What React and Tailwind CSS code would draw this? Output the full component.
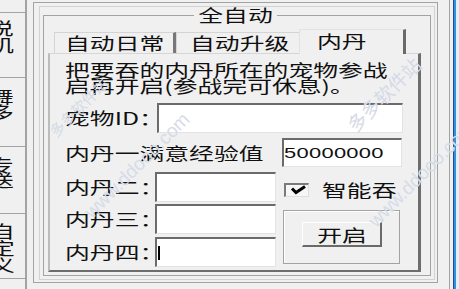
import React from "react";

const S = ({ children, className = "" }) => (
  <span className={"inline-block whitespace-nowrap origin-left [transform:scaleX(1.46)] " + className}>
    {children}
  </span>
);

const SC = ({ children, className = "" }) => (
  <span className={"inline-block whitespace-nowrap origin-center [transform:scaleX(1.46)] " + className}>
    {children}
  </span>
);

const Field = ({ className = "", children }) => (
  <div
    className={
      "bg-white border-t-2 border-l-2 border-t-[#6b6b6b] border-l-[#6b6b6b] border-r border-b border-r-[#e3e3e3] border-b-[#e3e3e3] flex items-center shrink-0 " +
      className
    }
  >
    {children}
  </div>
);

export default function App() {
  return (
    <div className="relative w-[459px] h-[289px] bg-[#f0f0f0] flex overflow-hidden font-['Noto_Sans_CJK_SC',sans-serif] text-[17px] leading-[16px] text-[#101010]">
      {/* left vertical tab strip */}
      <div className="w-[27px] h-full shrink-0 border-r-2 border-r-[#a3a3a3] flex flex-col overflow-hidden">
        <div className="h-[13px] shrink-0 border-b border-b-[#a3a3a3]" />
        <div className="h-[65px] shrink-0 border-b border-b-[#a3a3a3] pt-[7px] flex flex-col gap-[1px]">
          <S className="-ml-[11px]">说</S>
          <S className="-ml-[11px]">机</S>
        </div>
        <div className="h-[69px] shrink-0 border-b border-b-[#a3a3a3] pt-[10px] flex flex-col">
          <S className="-ml-[11px]">舞</S>
          <S className="-ml-[11px]">多</S>
        </div>
        <div className="h-[67px] shrink-0 border-b border-b-[#a3a3a3] pt-[10px] flex flex-col leading-[15px]">
          <S className="-ml-[11px]">专</S>
          <S className="-ml-[11px]">送</S>
        </div>
        <div className="h-[65px] shrink-0 border-b border-b-[#a3a3a3] pt-[9px] flex flex-col gap-[1px]">
          <S className="-ml-[10px]">自</S>
          <S className="-ml-[10px]">定</S>
          <S className="-ml-[10px]">义</S>
        </div>
      </div>

      {/* main frame */}
      <div className="ml-[6px] mt-[2px] w-[405px] h-[281px] shrink-0 border border-[#a3a3a3] pl-[5px] pt-[3px]">
        <div className="w-[396px] h-[274px] border border-[#d2d2d2] pl-[3px]">
          <fieldset className="w-[388px] h-[269px] m-0 min-w-0 border border-[#a3a3a3] pl-[4px] pr-[8px] pb-[2px]">
            <legend className="mx-auto px-[16px] bg-[#f0f0f0]">
              <SC>全自动</SC>
            </legend>

            {/* tabs */}
            <div className="mt-[6px] h-[24px] flex items-end">
              <div className="ml-[6px] w-[122px] h-[21px] border-t border-l border-[#d4d4d4] border-r-[3px] border-r-[#777777] pl-[10px] flex items-center">
                <S>自动日常</S>
              </div>
              <div className="w-[123px] h-[21px] border-t border-l border-[#d4d4d4] pl-[13px] flex items-center">
                <S>自动升级</S>
              </div>
              <div className="relative z-10 -mb-px w-[107px] h-[25px] bg-[#f0f0f0] border-t border-l border-[#e2e2e2] border-r-[3px] border-r-[#6a6a6a] pl-[17px] pt-[3px]">
                <S>内丹</S>
              </div>
            </div>

            {/* tab panel */}
            <div className="w-[373px] h-[219px] border-l-2 border-t border-r-[3px] border-b-2 border-l-[#bcbcbc] border-t-[#d6d6d6] border-r-[#6d6d6d] border-b-[#6d6d6d] pl-[15px] pt-[8px]">
              <div>
                <S>把要吞的内丹所在的宠物参战</S>
              </div>
              <div>
                <S>启再开启(参战完可休息)。</S>
              </div>

              <div className="mt-[9px] flex items-center">
                <div className="w-[92px] shrink-0">
                  <S>宠物ID：</S>
                </div>
                <Field className="w-[246px] h-[30px]" />
              </div>

              <div className="mt-[5px] flex items-center">
                <div className="w-[217px] shrink-0">
                  <S>内丹一满意经验值</S>
                </div>
                <Field className="w-[120px] h-[29px]">
                  <S className="font-['Liberation_Sans',sans-serif] text-[15px] tracking-[0.2px]">50000000</S>
                </Field>
              </div>

              <div className="mt-[5px] flex">
                <div className="flex flex-col">
                  <div className="flex items-center">
                    <div className="w-[90px] shrink-0">
                      <S>内丹二：</S>
                    </div>
                    <Field className="w-[121px] h-[30px]" />
                  </div>
                  <div className="mt-[2px] flex items-center">
                    <div className="w-[90px] shrink-0">
                      <S>内丹三：</S>
                    </div>
                    <Field className="w-[121px] h-[30px]" />
                  </div>
                  <div className="mt-[3px] flex items-center">
                    <div className="w-[90px] shrink-0">
                      <S>内丹四：</S>
                    </div>
                    <Field className="w-[121px] h-[30px]">
                      <div className="ml-[1px] w-[2px] h-[14px] bg-black" />
                    </Field>
                  </div>
                </div>

                <div className="ml-[7px] w-[117px] flex flex-col">
                  <div className="mt-[10px] h-[15px] flex items-center">
                    <div className="ml-[1px] w-[25px] h-[14px] shrink-0 bg-[#f6f6f6] border-t-2 border-l-2 border-t-[#7a7a7a] border-l-[#7a7a7a] border-r border-b border-r-[#dedede] border-b-[#dedede]">
                      <svg width="22" height="11" viewBox="0 0 22 11" className="block">
                        <path d="M6 3.5 L10 7.5 L19 1.5" fill="none" stroke="#000" strokeWidth="3" />
                      </svg>
                    </div>
                    <div className="ml-[13px]">
                      <S>智能吞</S>
                    </div>
                  </div>
                  <div className="mt-[13px] w-[117px] h-[54px] border border-[#a3a3a3] shadow-[inset_1px_1px_0_#ffffff] pl-[18px] pt-[11px]">
                    <div className="w-[80px] h-[25px] border-t border-l border-white border-r-2 border-b-2 border-r-[#6a6a6a] border-b-[#6a6a6a] pt-[2px] flex items-center justify-center">
                      <SC>开启</SC>
                    </div>
                  </div>
                </div>
              </div>
            </div>
          </fieldset>
        </div>
      </div>

      {/* right window edge */}
      <div className="ml-[11px] w-px h-full shrink-0 bg-[#a3a3a3]" />
      <div className="w-[3px] h-full shrink-0" />
      <div className="w-px h-full shrink-0 bg-[#1d4f86]" />
      <div className="w-[2px] h-full shrink-0 bg-[#2f93df]" />
      <div className="w-[3px] h-full shrink-0 bg-[#e4eef8]" />

      {/* watermarks */}
      <div className="pointer-events-none absolute left-[52px] top-[126px] origin-left -rotate-45 text-[15px] leading-[16px] text-[#d4dae6]">
        多多软件站
      </div>
      <div className="pointer-events-none absolute left-[88px] top-[205px] origin-left -rotate-45 font-['Liberation_Sans',sans-serif] text-[19px] leading-[20px] text-[#d6dce8]">
        www.ddooo.com
      </div>
      <div className="pointer-events-none absolute left-[350px] top-[118px] origin-left -rotate-45 text-[19px] leading-[20px] text-[#d4dae6]">
        多多软件站
      </div>
      <div className="pointer-events-none absolute left-[372px] top-[214px] origin-left -rotate-45 font-['Liberation_Sans',sans-serif] text-[19px] leading-[20px] text-[#d6dce8]">
        www.ddooo.com
      </div>
    </div>
  );
}
